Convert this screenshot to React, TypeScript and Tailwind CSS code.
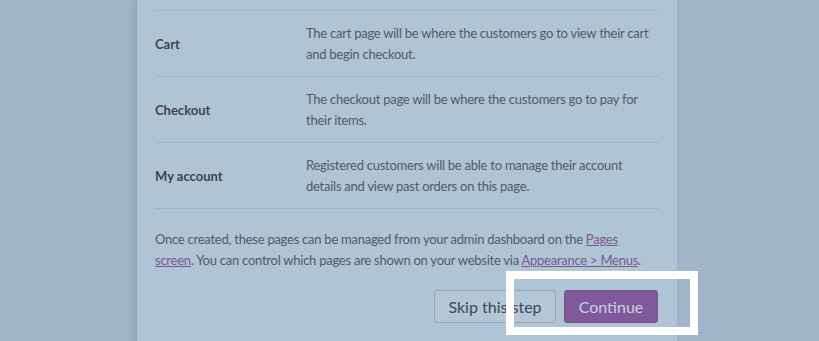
import React from 'react';

const pages = [
  {
    name: 'Cart',
    desc: 'The cart page will be where the customers go to view their cart and begin checkout.',
  },
  {
    name: 'Checkout',
    desc: 'The checkout page will be where the customers go to pay for their items.',
  },
  {
    name: 'My account',
    desc: 'Registered customers will be able to manage their account details and view past orders on this page.',
  },
];

const App: React.FC = () => {
  return (
    <div
      className="relative w-[819px] h-[341px] overflow-hidden bg-[#a0b5ca]"
      style={{ fontFamily: 'Lato, "Open Sans", sans-serif' }}
    >
      <div className="ml-[137px] w-[540px] h-[360px] bg-[#afc4d5] px-[18px] pt-[10px] shadow-[-4px_0_6px_rgba(120,140,160,0.35)]">
        <table className="w-full border-t border-[#9fb4c6] text-[13px] leading-[21px] tracking-[-0.25px]">
          <tbody>
            {pages.map((p) => (
              <tr key={p.name} className="border-b border-[#9fb4c6]">
                <td className="w-[151px] pt-[12px] pb-[11px] align-middle font-bold tracking-normal text-[#3c4651]">{p.name}</td>
                <td className="pt-[12px] pb-[11px] text-[#515c68]">{p.desc}</td>
              </tr>
            ))}
          </tbody>
        </table>

        <p className="mt-[20px] text-[13px] leading-[21px] tracking-[-0.25px] text-[#515c68]">
          Once created, these pages can be managed from your admin dashboard on the{' '}
          <a className="text-[#7a5892] underline">Pages screen</a>. You can control which pages are shown on
          your website via <a className="text-[#7a5892] underline">Appearance &gt; Menus</a>.
        </p>

        <div className="mt-[19px] flex justify-end gap-[8px] pr-[1px]">
          <button className="h-[33px] w-[122px] rounded-[3px] border border-[#94a7b8] bg-[#b3c7d7] text-[16px] text-[#3d4956]">
            Skip this step
          </button>
          <button className="h-[33px] w-[94px] rounded-[3px] border border-[#74538a] bg-[#80599a] text-[16px] text-[#c8d1de]">
            Continue
          </button>
        </div>
      </div>

      {/* highlight box over the continue button */}
      <div className="absolute left-[506px] top-[271px] w-[192px] h-[64px] border-[8px] border-white pointer-events-none" />
    </div>
  );
};

export default App;
